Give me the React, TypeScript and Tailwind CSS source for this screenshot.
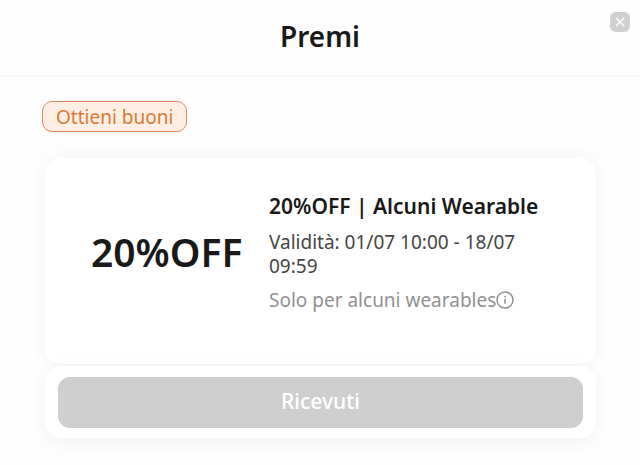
import * as React from "react";

const coupon = {
  amount: "20%OFF",
  title: "20%OFF | Alcuni Wearable",
  validity: "Validità: 01/07 10:00 - 18/07 09:59",
  note: "Solo per alcuni wearables",
};

const CloseIcon = () => (
  <svg viewBox="0 0 20 20" className="w-5 h-5" fill="none" stroke="currentColor" strokeWidth="1.3" strokeLinecap="round">
    <path d="M6.4 6.2l7.4 7.6M13.8 6.2l-7.4 7.6" />
  </svg>
);

const InfoIcon = () => (
  <svg viewBox="0 0 18 18" className="w-[18px] h-[18px]" fill="none" stroke="currentColor" strokeWidth="1.5">
    <circle cx="9" cy="9" r="8" />
    <path d="M9 7.8v5" />
    <circle cx="9" cy="5.6" r="0.9" fill="currentColor" stroke="none" />
  </svg>
);

const Header = () => (
  <header className="relative flex items-center justify-center pt-[18px] pb-[21px] border-b-2 border-[#f7f7f7]">
    <h1 className="text-[28px] leading-9 font-semibold text-[#191919]">Premi</h1>
    <button
      type="button"
      aria-label="Chiudi"
      className="absolute top-3 right-[10px] w-5 h-5 rounded-md bg-[#d0d0d0] text-white"
    >
      <CloseIcon />
    </button>
  </header>
);

const CouponCard = () => (
  <article className="flex flex-col gap-0.5">
    <div className="rounded-2xl bg-white shadow-[0_0_20px_rgba(0,0,0,0.06)] flex items-center pl-[46px] pr-10 pt-8 pb-[50px]">
      <p className="w-[178px] shrink-0 text-[39px] leading-[48px] font-semibold text-[#191919]">{coupon.amount}</p>
      <div className="flex-1 min-w-0">
        <h2 className="text-[21px] leading-8 font-semibold text-[#191919]">{coupon.title}</h2>
        <p className="mt-2 max-w-[270px] text-[19px] leading-6 text-[#454545]">{coupon.validity}</p>
        <p className="mt-2 flex items-center text-[19px] leading-7 text-[#919191]">
          {coupon.note}
          <button type="button" aria-label="Informazioni">
            <InfoIcon />
          </button>
        </p>
      </div>
    </div>
    <div className="relative rounded-2xl bg-white shadow-[0_4px_20px_rgba(0,0,0,0.06)] px-[13px] pt-[11px] pb-[10px]">
      <button type="button" className="w-full h-[51px] rounded-xl bg-[#cfcfcf] pb-0.5 text-[21px] font-medium text-white">
        Ricevuti
      </button>
    </div>
  </article>
);

export default function App() {
  return (
    <div className="min-h-screen bg-[#fefefe] font-['Noto_Sans',sans-serif]">
      <Header />
      <main className="pt-6 pl-[45px] pr-11 pb-7">
        <button
          type="button"
          className="-ml-[3px] h-[31px] px-[13px] rounded-[10px] border border-[#e08c5a] bg-[#feeee4] text-[19px] leading-6 text-[#dd7a35]"
        >
          Ottieni buoni
        </button>
        <div className="mt-[26px]">
          <CouponCard />
        </div>
      </main>
    </div>
  );
}
